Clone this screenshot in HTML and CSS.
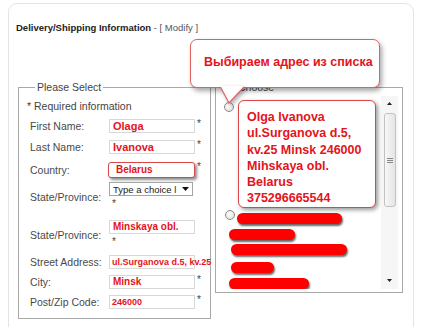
FILE: index.html
```html
<!DOCTYPE html>
<html>
<head>
<meta charset="utf-8">
<link rel="stylesheet" href="styles.css">
</head>
<body>
<div class="panel">
  <div class="title"><b>Delivery/Shipping Information</b> - [ Modify ]</div>
  <div class="cols">
    <fieldset class="form">
      <legend>Please Select</legend>
      <div class="req">* Required information</div>
      <div class="row r1"><span class="lbl">First Name:</span><span class="field big">Olaga</span><span class="ast">*</span></div>
      <div class="row r2"><span class="lbl">Last Name:</span><span class="field big">Ivanova</span><span class="ast">*</span></div>
      <div class="row r3"><span class="lbl">Country:</span><span class="field hl">Belarus</span><span class="ast">*</span></div>
      <div class="row r4"><span class="lbl low">State/Province:</span>
        <div class="cell">
          <div class="select"><span class="stext">Type a choice l</span><svg class="darr" width="7" height="4" viewBox="0 0 7 4"><path d="M0 0H7L3.5 4Z" fill="#111"/></svg></div>
          <span class="ast2">*</span>
        </div>
      </div>
      <div class="row r5"><span class="lbl low">State/Province:</span>
        <div class="cell">
          <span class="field">Minskaya obl.</span>
          <span class="ast2">*</span>
        </div>
      </div>
      <div class="row r6"><span class="lbl">Street Address:</span><span class="field small over">ul.Surganova d.5, kv.25</span></div>
      <div class="row r7"><span class="lbl">City:</span><span class="field">Minsk</span><span class="ast">*</span></div>
      <div class="row r8"><span class="lbl">Post/Zip Code:</span><span class="field small">246000</span><span class="ast">*</span></div>
    </fieldset>
    <fieldset class="choose">
      <legend>Choose</legend>
      <div class="listbox">
        <div class="list">
          <div class="item1"><span class="radio r-a"></span>
            <div class="addr">Olga Ivanova<br>ul.Surganova d.5,<br>kv.25 Minsk 246000<br>Mihskaya obl.<br>Belarus<br>375296665544</div>
          </div>
          <div class="item2"><span class="radio r-b"></span><span class="bar b1"></span></div>
          <span class="bar b2"></span>
          <span class="bar b3"></span>
          <span class="bar b4"></span>
          <span class="bar b5"></span>
        </div>
        <div class="scroll">
          <div class="sarrow"><svg width="5" height="3" viewBox="0 0 5 3"><path d="M0 3H5L2.5 0Z" fill="#222"/></svg></div>
          <div class="thumb"><span class="grip"></span><span class="grip"></span><span class="grip"></span></div>
          <div class="sfill"></div>
          <div class="sarrow down"><svg width="5" height="3" viewBox="0 0 5 3"><path d="M0 0H5L2.5 3Z" fill="#222"/></svg></div>
        </div>
      </div>
    </fieldset>
  </div>
  <div class="bubble">Выбираем адрес из списка<svg class="tail" width="26" height="19" viewBox="0 0 26 19"><polygon points="0.5,1 9,17 24,1" fill="#fff"/><rect x="1" y="0" width="22.5" height="2" fill="#fff"/><polyline points="0.5,1 9,17 24,1" fill="none" stroke="#e06060" stroke-width="1.2"/></svg></div>
</div>
</body>
</html>
```

FILE: styles.css
```css
html, body {
  margin: 0;
  padding: 0;
  background: #fff;
}
body {
  font-family: "Liberation Sans", Arial, sans-serif;
  overflow: hidden;
  height: 327px;
}
.panel {
  position: relative;
  margin: 3px 0 0 8px;
  width: 406px;
  height: 340px;
  box-sizing: border-box;
  border: 1px solid #e4e4e4;
  border-radius: 9px;
  padding: 18px 0 0 7px;
}
.title {
  font-size: 9.5px;
  line-height: 12px;
  height: 12px;
  color: #555;
  white-space: nowrap;
}
.title b {
  color: #222;
}
.cols {
  display: flex;
  align-items: flex-start;
  gap: 4px;
  margin-top: 47px;
  margin-left: 2px;
}
fieldset {
  margin: 0;
  border: 1px solid #a9a9a9;
  min-width: 0;
  box-sizing: border-box;
}
legend {
  font-size: 10.5px;
  line-height: 12px;
  padding: 0 2px;
  color: #444;
}
.form {
  width: 193px;
  height: 238px;
  padding: 7px 0 0 8px;
}
.form legend {
  margin-left: 8px;
}
.req {
  font-size: 10.5px;
  line-height: 12px;
  color: #444;
}
.row {
  display: flex;
  align-items: center;
  margin-left: 3px;
}
.lbl {
  flex: none;
  width: 79px;
  font-size: 10.5px;
  line-height: 12px;
  color: #4a4a4a;
  white-space: nowrap;
}
.lbl.low {
  padding-top: 4px;
}
.field {
  flex: none;
  display: block;
  width: 86px;
  height: 14px;
  box-sizing: border-box;
  border: 1px solid #d8d8d8;
  color: #e3141b;
  font-weight: bold;
  font-size: 10px;
  line-height: 12px;
  padding-left: 3px;
  white-space: nowrap;
  overflow: hidden;
}
.field.big {
  font-size: 11px;
}
.field.small {
  font-size: 9px;
  padding-left: 2px;
}
.field.over {
  overflow: visible;
}
.field.hl {
  width: 87px;
  height: 16px;
  margin-left: -1px;
  border: 1px solid #d84848;
  border-radius: 3px;
  box-shadow: 2px 2px 3px rgba(0, 0, 0, 0.45);
  padding-left: 7px;
  line-height: 14px;
  background: #fff;
}
.ast {
  align-self: flex-start;
  margin-left: 2px;
  font-size: 10px;
  line-height: 10px;
  color: #444;
}
.cell {
  display: flex;
  flex-direction: column;
  width: 86px;
}
.ast2 {
  font-size: 10px;
  line-height: 12px;
  height: 12px;
  padding-left: 3px;
  padding-top: 2px;
  box-sizing: border-box;
  color: #444;
}
.select {
  width: 84px;
  height: 14px;
  box-sizing: border-box;
  border: 1px solid #a4a4a4;
  display: flex;
  align-items: center;
  justify-content: space-between;
  padding: 0 3px 0 3px;
  font-size: 9.5px;
  color: #222;
  background: #fff;
}
.stext {
  white-space: nowrap;
}
.r1 { margin-top: 7px; }
.r2 { margin-top: 7px; }
.r3 { margin-top: 8px; }
.r4 { margin-top: 4px; }
.r5 { margin-top: 12px; }
.r6 { margin-top: 9px; }
.r7 { margin-top: 6px; }
.r8 { margin-top: 6px; }

.choose {
  width: 188px;
  height: 212px;
  padding: 3px 4px 0 0;
}
.choose legend {
  margin-left: 20px;
}
.listbox {
  display: flex;
  height: 193px;
}
.list {
  flex: 1;
  overflow: hidden;
  padding-top: 4px;
}
.radio {
  flex: none;
  display: block;
  width: 10px;
  height: 10px;
  box-sizing: border-box;
  border: 1px solid #8a8a8a;
  border-radius: 50%;
  background: radial-gradient(circle at 40% 40%, #fff 0%, #e4e4e4 70%, #cfcfcf 100%);
}
.item1 {
  display: flex;
  align-items: flex-start;
}
.r-a {
  margin: 2px 0 0 8px;
}
.addr {
  margin-left: 4px;
  width: 138px;
  height: 108px;
  box-sizing: border-box;
  border: 1px solid #d84848;
  border-radius: 6px;
  box-shadow: 2px 2px 4px rgba(0, 0, 0, 0.4);
  background: #fff;
  padding: 8px 0 0 8px;
  color: #e3141b;
  font-weight: bold;
  font-size: 12.5px;
  line-height: 16.3px;
  white-space: nowrap;
  overflow: hidden;
}
.item2 {
  display: flex;
  align-items: flex-start;
  margin-top: 2px;
}
.r-b {
  margin-left: 9px;
}
.bar {
  display: block;
  height: 11px;
  border-radius: 6px;
  background: #ff0000;
  box-shadow: 1px 2px 2px rgba(0, 0, 0, 0.6);
}
.b1 { margin: 3px 0 0 2px; width: 105px; }
.b2 { margin: 5px 0 0 13px; width: 66px; }
.b3 { margin: 4px 0 0 15px; width: 116px; }
.b4 { margin: 7px 0 0 15px; width: 43px; }
.b5 { margin: 5px 0 0 13px; width: 80px; }

.scroll {
  flex: none;
  width: 17px;
  display: flex;
  flex-direction: column;
  align-items: center;
  background: #f6f6f6;
}
.sarrow {
  height: 14px;
  display: flex;
  align-items: center;
  justify-content: center;
}
.sarrow.down {
  margin-bottom: 2px;
}
.thumb {
  margin-top: 3px;
  width: 12px;
  height: 94px;
  box-sizing: border-box;
  border: 1px solid #c2c2c2;
  border-radius: 3px;
  background: linear-gradient(90deg, #f8f8f8, #e4e4e4);
  display: flex;
  flex-direction: column;
  align-items: center;
  justify-content: center;
  gap: 1px;
}
.grip {
  display: block;
  width: 6px;
  height: 1px;
  background: #888;
}
.sfill {
  flex: 1;
}
.bubble {
  position: absolute;
  left: 181px;
  top: 35px;
  width: 190px;
  height: 49px;
  box-sizing: border-box;
  border: 1px solid #e06060;
  border-radius: 7px;
  background: #fff;
  box-shadow: 2px 3px 5px rgba(0, 0, 0, 0.35);
  padding-left: 13px;
  color: #e3141b;
  font-weight: bold;
  font-size: 12.5px;
  line-height: 45px;
  white-space: nowrap;
}
.tail {
  position: absolute;
  left: 29px;
  top: 46px;
  filter: drop-shadow(2px 2px 2px rgba(0, 0, 0, 0.3));
}
```
